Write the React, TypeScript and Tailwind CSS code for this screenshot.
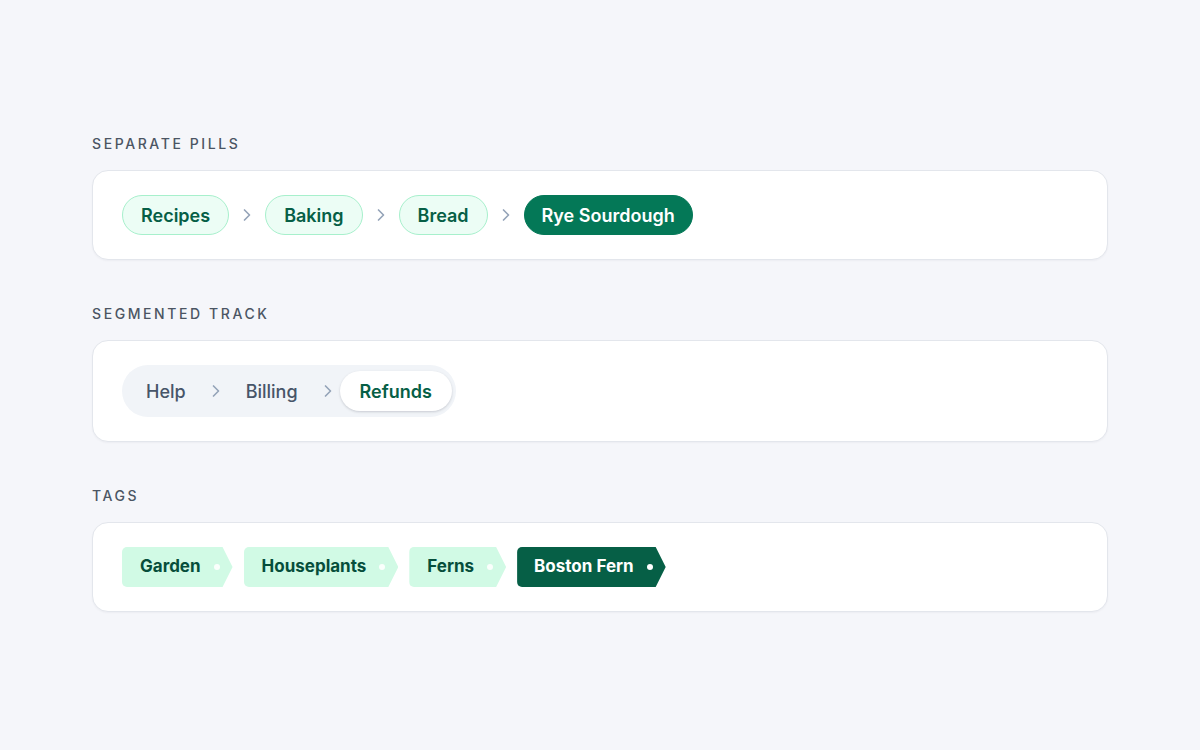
import React from "react";

const Chevron = ({ className = "" }: { className?: string }) => (
  <svg
    viewBox="0 0 24 24"
    width="20"
    height="20"
    fill="none"
    stroke="currentColor"
    strokeWidth="2"
    strokeLinecap="round"
    strokeLinejoin="round"
    className={className}
  >
    <path d="m9 18 6-6-6-6" />
  </svg>
);

const Label = ({ children }: { children: React.ReactNode }) => (
  <div className="mb-[15px] h-[22px] text-[14px] leading-[22px] font-medium tracking-[0.185em] text-[#4b5563] uppercase">
    {children}
  </div>
);

const Card = ({ children }: { children: React.ReactNode }) => (
  <div className="rounded-2xl border border-[#e3e6ec] bg-white px-[29px] py-6 shadow-[0_1px_2px_rgba(16,24,40,0.04)]">
    {children}
  </div>
);

export default function App() {
  const pills = ["Recipes", "Baking", "Bread"];
  const tags = ["Garden", "Houseplants", "Ferns"];
  return (
    <div
      className="min-h-[750px] w-full bg-[#f5f6fa] pt-[133px]"
      style={{ fontFamily: "Inter, 'Noto Sans', sans-serif" }}
    >
      <div className="mx-auto flex w-[1016px] flex-col gap-[43px]">
        <section>
          <Label>Separate pills</Label>
          <Card>
            <div className="flex items-center gap-2">
              {pills.map((p) => (
                <React.Fragment key={p}>
                  <span className="flex h-10 items-center rounded-full border border-[#a7f0cc] bg-[#ecfdf5] px-[18px] text-[18px] font-semibold text-[#065f46]">
                    {p}
                  </span>
                  <Chevron className="text-[#94a3b8]" />
                </React.Fragment>
              ))}
              <span className="flex h-10 items-center rounded-full border border-[#047857] bg-[#047857] px-[17px] text-[18px] font-semibold text-white">
                Rye Sourdough
              </span>
            </div>
          </Card>
        </section>

        <section>
          <Label>Segmented track</Label>
          <Card>
            <div className="inline-flex h-[52px] items-center rounded-full bg-[#f1f4f8] px-1 py-1.5">
              <span className="flex h-10 items-center px-5 text-[18px] font-medium text-[#475569]">
                Help
              </span>
              <Chevron className="text-[#94a3b8]" />
              <span className="flex h-10 items-center px-5 text-[18px] font-medium text-[#475569]">
                Billing
              </span>
              <Chevron className="text-[#94a3b8]" />
              <span className="ml-0.5 flex h-10 items-center rounded-full bg-white px-5 text-[18px] font-semibold text-[#065f46] shadow-[0_1px_3px_rgba(15,23,42,0.12),0_1px_2px_rgba(15,23,42,0.06)]">
                Refunds
              </span>
            </div>
          </Card>
        </section>

        <section>
          <Label>Tags</Label>
          <Card>
            <div className="flex items-center gap-[11px]">
              {tags.map((t) => (
                <span
                  key={t}
                  className="flex h-10 items-center gap-[13px] rounded-[5px] bg-[#d1fae5] pr-[13px] pl-[18px] text-[17px] font-bold text-[#064e3b] [clip-path:polygon(0_0,calc(100%_-_10px)_0,100%_50%,calc(100%_-_10px)_100%,0_100%)]"
                >
                  {t}
                  <span className="h-1.5 w-1.5 rounded-full bg-white/90" />
                </span>
              ))}
              <span className="flex h-10 items-center gap-[13px] rounded-[5px] bg-[#065f46] pr-[13px] pl-[17px] text-[17px] font-bold text-white [clip-path:polygon(0_0,calc(100%_-_10px)_0,100%_50%,calc(100%_-_10px)_100%,0_100%)]">
                Boston Fern
                <span className="h-1.5 w-1.5 rounded-full bg-white" />
              </span>
            </div>
          </Card>
        </section>
      </div>
    </div>
  );
}
